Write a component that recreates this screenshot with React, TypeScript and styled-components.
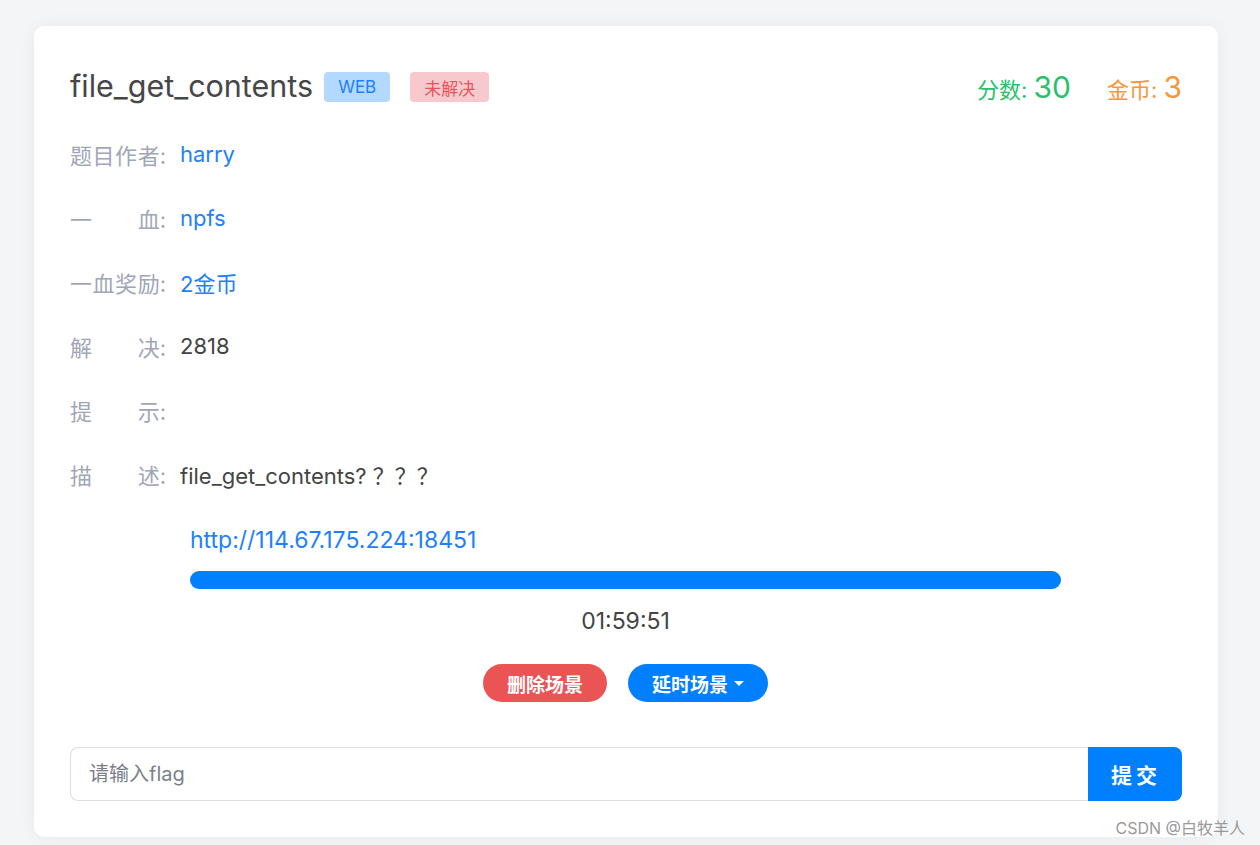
import styled, { createGlobalStyle } from "styled-components";

const GlobalStyle = createGlobalStyle`
  html, body {
    margin: 0;
    padding: 0;
    background: #f4f5f7;
    font-family: Inter, "Noto Sans CJK SC", sans-serif;
  }
  * {
    box-sizing: border-box;
  }
`;

const Page = styled.div`
  position: relative;
  width: 1260px;
  height: 845px;
  padding: 26px 42px 0 34px;
  background: #f4f5f7;
`;

const Card = styled.div`
  background: #fff;
  border-radius: 10px;
  box-shadow: 0 0 18px rgba(0, 0, 0, 0.05);
  padding: 36px;
  height: 811px;
`;

const Head = styled.div`
  display: flex;
  align-items: center;
  height: 50px;
  margin-bottom: 10px;
`;

const Title = styled.h1`
  margin: 0 11px 3px 0;
  font-size: 30.5px;
  font-weight: 400;
  color: #474747;
`;

const Tag = styled.span<{ $bg: string; $fg: string }>`
  display: inline-flex;
  align-items: center;
  justify-content: center;
  height: 30px;
  padding: 0 14px;
  margin-right: 20px;
  border-radius: 4px;
  font-size: 17px;
  background: ${(p) => p.$bg};
  color: ${(p) => p.$fg};
`;

const Stats = styled.div`
  margin-left: auto;
  display: flex;
  align-items: baseline;
  gap: 36px;
`;

const Stat = styled.span<{ $color: string }>`
  color: ${(p) => p.$color};
  font-size: 22px;
  b {
    font-weight: 400;
    font-size: 30px;
  }
`;

const Row = styled.div`
  display: flex;
  align-items: center;
  height: 64px;
  font-size: 22px;
`;

const Label = styled.span`
  display: flex;
  align-items: baseline;
  width: 96px;
  margin-right: 14px;
  color: #a1a6b7;
  white-space: nowrap;
`;

const LabelText = styled.span`
  width: 91px;
  text-align: justify;
  text-align-last: justify;
`;

const Value = styled.span<{ $link?: boolean }>`
  color: ${(p) => (p.$link ? "#1e80ff" : "#444")};
`;

const Scene = styled.div`
  margin: 16px 121px 0 120px;
  display: flex;
  flex-direction: column;
`;

const Url = styled.a`
  font-size: 23px;
  line-height: 36px;
  color: #1e80ff;
  text-decoration: none;
`;

const Bar = styled.div`
  margin-top: 13px;
  height: 18px;
  border-radius: 9px;
  background: #0080ff;
`;

const Timer = styled.div`
  margin-top: 14px;
  text-align: center;
  font-size: 23px;
  line-height: 36px;
  color: #444;
`;

const Actions = styled.div`
  margin-top: 25px;
  display: flex;
  justify-content: center;
  gap: 21px;
`;

const Pill = styled.button<{ $bg: string }>`
  height: 38px;
  padding: 0 24px;
  border: none;
  border-radius: 19px;
  background: ${(p) => p.$bg};
  color: #fff;
  font-family: inherit;
  font-size: 19px;
  font-weight: 700;
  display: flex;
  align-items: center;
  gap: 6px;
`;

const Caret = styled.span`
  width: 0;
  height: 0;
  border-left: 5px solid transparent;
  border-right: 5px solid transparent;
  border-top: 5px solid #fff;
`;

const Submit = styled.form`
  margin-top: 45px;
  display: flex;
  height: 54px;
`;

const Input = styled.input`
  flex: 1;
  border: 1px solid #dedede;
  border-right: none;
  border-radius: 8px 0 0 8px;
  padding: 0 18px;
  font-family: inherit;
  font-size: 20px;
  color: #444;
  outline: none;
  &::placeholder {
    color: #7a7f8a;
  }
`;

const Send = styled.button`
  width: 94px;
  border: none;
  border-radius: 0 8px 8px 0;
  background: #0080ff;
  color: #fff;
  font-family: inherit;
  font-size: 21px;
  font-weight: 700;
  letter-spacing: 4px;
  padding-left: 8px;
`;

const Watermark = styled.span`
  position: absolute;
  right: 15px;
  bottom: 6px;
  font-size: 16px;
  color: #999;
`;

const rows: { label: string; value: string; link?: boolean }[] = [
  { label: "题目作者", value: "harry", link: true },
  { label: "一血", value: "npfs", link: true },
  { label: "一血奖励", value: "2金币", link: true },
  { label: "解决", value: "2818" },
  { label: "提示", value: "" },
  { label: "描述", value: "file_get_contents? ？？？" },
];

export default function App() {
  return (
    <>
      <GlobalStyle />
      <Page>
        <Card>
          <Head>
            <Title>file_get_contents</Title>
            <Tag $bg="#b3d9ff" $fg="#1e80ff">WEB</Tag>
            <Tag $bg="#f8c9cc" $fg="#e8545c">未解决</Tag>
            <Stats>
              <Stat $color="#2ac06d">
                分数: <b>30</b>
              </Stat>
              <Stat $color="#f7963c">
                金币: <b>3</b>
              </Stat>
            </Stats>
          </Head>
          {rows.map((r) => (
            <Row key={r.label}>
              <Label>
                <LabelText>{r.label}</LabelText>:
              </Label>
              <Value $link={r.link}>{r.value}</Value>
            </Row>
          ))}
          <Scene>
            <Url href="#">http://114.67.175.224:18451</Url>
            <Bar />
            <Timer>01:59:51</Timer>
            <Actions>
              <Pill $bg="#ea5455">删除场景</Pill>
              <Pill $bg="#0080ff">
                延时场景
                <Caret />
              </Pill>
            </Actions>
          </Scene>
          <Submit onSubmit={(e) => e.preventDefault()}>
            <Input placeholder="请输入flag" />
            <Send type="submit">提交</Send>
          </Submit>
        </Card>
        <Watermark>CSDN @白牧羊人</Watermark>
      </Page>
    </>
  );
}
